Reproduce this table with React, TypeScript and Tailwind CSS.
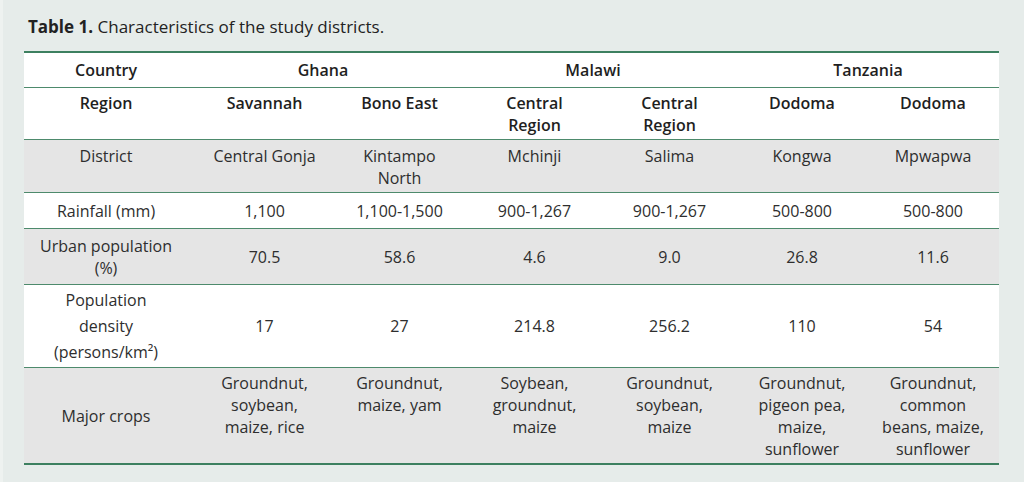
import React from "react";

const cols = "grid grid-cols-[173px_135px_135px_135px_135px_130px_132px]";
const font = { fontFamily: '"Open Sans", "Noto Sans", sans-serif' };

function Cell({ children, className = "" }: { children?: React.ReactNode; className?: string }) {
  return <div className={"flex justify-center text-center " + className}>{children}</div>;
}

export default function App() {
  const data = "text-[16px] leading-[22px] text-[#2e2e2e]";
  const head = "text-[16px] leading-[22px] font-semibold text-[#1f1f1f]";
  return (
    <div className="w-[1024px] h-[482px] bg-[#e6ecea] border-l-[3px] border-[#eef2f0] overflow-hidden" style={font}>
      <div className="pt-[16px] pl-[25px] text-[17px] leading-[22px] text-[#222]">
        <span className="font-bold">Table 1.</span> Characteristics of the study districts.
      </div>
      <div className="ml-[21px] mt-[13px] w-[975px] border-t-2 border-[#3d8060]">
        {/* Country */}
        <div className={cols + " h-[35px] bg-white border-b border-[#4d8a6c] items-center " + head}>
          <Cell className="pr-[9px]">Country</Cell>
          <Cell className="col-span-2 pr-[18px]">Ghana</Cell>
          <Cell className="col-span-2 pr-[18px]">Malawi</Cell>
          <Cell className="col-span-2">Tanzania</Cell>
        </div>
        {/* Region */}
        <div className={cols + " h-[52px] bg-white border-b border-[#4d8a6c] items-start pt-[4px] " + head}>
          <Cell className="pr-[9px]">Region</Cell>
          <Cell>Savannah</Cell>
          <Cell>Bono East</Cell>
          <Cell>Central<br />Region</Cell>
          <Cell>Central<br />Region</Cell>
          <Cell>Dodoma</Cell>
          <Cell>Dodoma</Cell>
        </div>
        {/* District */}
        <div className={cols + " h-[53px] bg-[#e5e5e5] border-b border-[#4d8a6c] items-start pt-[5px] " + data}>
          <Cell className="pr-[9px]">District</Cell>
          <Cell>Central Gonja</Cell>
          <Cell>Kintampo<br />North</Cell>
          <Cell>Mchinji</Cell>
          <Cell>Salima</Cell>
          <Cell>Kongwa</Cell>
          <Cell>Mpwapwa</Cell>
        </div>
        {/* Rainfall */}
        <div className={cols + " h-[36px] bg-white border-b border-[#4d8a6c] items-center " + data}>
          <Cell className="pr-[9px]">Rainfall (mm)</Cell>
          <Cell>1,100</Cell>
          <Cell>1,100-1,500</Cell>
          <Cell>900-1,267</Cell>
          <Cell>900-1,267</Cell>
          <Cell>500-800</Cell>
          <Cell>500-800</Cell>
        </div>
        {/* Urban population */}
        <div className={cols + " h-[56px] bg-[#e5e5e5] border-b border-[#4d8a6c] items-center " + data}>
          <Cell className="pr-[9px]">Urban population<br />(%)</Cell>
          <Cell>70.5</Cell>
          <Cell>58.6</Cell>
          <Cell>4.6</Cell>
          <Cell>9.0</Cell>
          <Cell>26.8</Cell>
          <Cell>11.6</Cell>
        </div>
        {/* Population density */}
        <div className={cols + " h-[83px] bg-white border-b border-[#4d8a6c] items-center " + data}>
          <Cell className="pr-[9px] leading-[26px]">
            Population<br />density<br />(persons/km²)
          </Cell>
          <Cell>17</Cell>
          <Cell>27</Cell>
          <Cell>214.8</Cell>
          <Cell>256.2</Cell>
          <Cell>110</Cell>
          <Cell>54</Cell>
        </div>
        {/* Major crops */}
        <div className={cols + " h-[97px] bg-[#e5e5e5] border-b-2 border-[#3d8060] items-center " + data}>
          <Cell className="pr-[9px]">Major crops</Cell>
          <Cell>Groundnut,<br />soybean,<br />maize, rice<br />&nbsp;</Cell>
          <Cell>Groundnut,<br />maize, yam<br />&nbsp;<br />&nbsp;</Cell>
          <Cell>Soybean,<br />groundnut,<br />maize<br />&nbsp;</Cell>
          <Cell>Groundnut,<br />soybean,<br />maize<br />&nbsp;</Cell>
          <Cell>Groundnut,<br />pigeon pea,<br />maize,<br />sunflower</Cell>
          <Cell>Groundnut,<br />common<br />beans, maize,<br />sunflower</Cell>
        </div>
      </div>
    </div>
  );
}
